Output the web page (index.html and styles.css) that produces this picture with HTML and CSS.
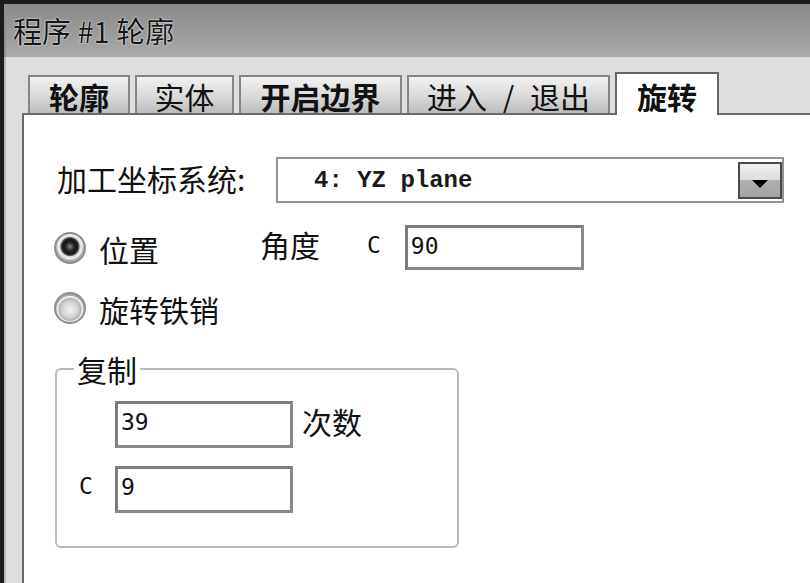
FILE: index.html
```html
<!DOCTYPE html>
<html lang="zh">
<head>
<meta charset="utf-8">
<title>程序 #1 轮廓</title>
<link rel="stylesheet" href="styles.css">
</head>
<body>
<div class="window">
  <div class="titlebar">程序 #1 轮廓</div>
  <div class="frame">
    <div class="tabs">
      <div class="tab bold t1">轮廓</div>
      <div class="tab t2">实体</div>
      <div class="tab bold t3">开启边界</div>
      <div class="tab t4">进入 / 退出</div>
      <div class="tab bold active t5">旋转</div>
    </div>
    <div class="panel">
      <div class="row row-csys">
        <span class="label csys-label">加工坐标系统:</span>
        <div class="combo">
          <span class="combo-text">4: YZ plane</span>
          <span class="combo-btn"><span class="arrow"></span></span>
        </div>
      </div>
      <div class="row row-pos">
        <span class="radio checked"></span>
        <span class="label radio-label">位置</span>
        <span class="label angle-label">角度</span>
        <span class="mono c-label">C</span>
        <div class="field angle-field">90</div>
      </div>
      <div class="row row-rot">
        <span class="radio"></span>
        <span class="label radio-label">旋转铁销</span>
      </div>
      <fieldset class="group">
        <legend class="label legend">复制</legend>
        <div class="rep-row rep-first">
          <span class="rep-lbl"></span>
          <div class="field rep-field">39</div>
          <span class="label count-label">次数</span>
        </div>
        <div class="rep-row">
          <span class="rep-lbl mono">C</span>
          <div class="field rep-field">9</div>
        </div>
      </fieldset>
    </div>
  </div>
</div>
</body>
</html>
```

FILE: styles.css
```css
html, body {
  margin: 0;
  padding: 0;
}
body {
  width: 810px;
  height: 583px;
  overflow: hidden;
  background: #dedede;
  font-family: "Noto Sans CJK SC", "Noto Sans", sans-serif;
  color: #111;
}
.window {
  width: 810px;
  height: 583px;
  box-sizing: border-box;
  border-top: 4px solid #1c1c1c;
  border-left: 4px solid #1c1c1c;
  display: flex;
  flex-direction: column;
}
.titlebar {
  height: 53px;
  flex: none;
  box-sizing: border-box;
  padding-left: 7px;
  display: flex;
  align-items: center;
  font-size: 29px;
  line-height: 1;
  color: #151515;
  background: linear-gradient(#8a8a8a, #9c9c9c 60%, #ababab);
  text-shadow: 0 0 2px rgba(255,255,255,0.9), 0 0 1px #fff;
  border-left: 2px solid #8f8f8f;
}
.frame {
  flex: 1;
  display: flex;
  flex-direction: column;
  padding: 15px 0 0 16px;
  background: #dedede;
  border-left: 2px solid #b8b8b8;
  box-sizing: border-box;
}
.tabs {
  height: 41px;
  flex: none;
  display: flex;
  align-items: flex-end;
  gap: 5px;
  padding-left: 6px;
}
.tab {
  box-sizing: border-box;
  height: 38px;
  border: 2px solid #858585;
  border-bottom: none;
  background: linear-gradient(#f2f2f2, #d9d9d9 55%, #bcbcbc);
  display: flex;
  align-items: center;
  justify-content: center;
  font-size: 30px;
  line-height: 1;
  color: #111;
  padding-top: 2px;
  white-space: pre;
}
.tab.bold { font-weight: 700; }
.t1 { width: 102px; }
.t2 { width: 99px; }
.t3 { width: 163px; }
.t4 { width: 203px; word-spacing: 9px; }
.t5 { width: 104px; }
.tab.active {
  height: 43px;
  margin-bottom: -2px;
  background: #fff;
  border-color: #666;
  position: relative;
  z-index: 1;
}
.panel {
  flex: 1;
  background: #fff;
  border-top: 2px solid #6a6a6a;
  border-left: 2px solid #6a6a6a;
  padding: 42px 0 0 30px;
  display: flex;
  flex-direction: column;
  align-items: flex-start;
}
.label {
  font-size: 30px;
  line-height: 1;
  color: #111;
}
.mono {
  font-family: "DejaVu Sans Mono", "Liberation Mono", monospace;
  font-size: 23px;
  line-height: 1;
  color: #111;
}
.row {
  display: flex;
  align-items: center;
}
.row-csys {
  height: 46px;
}
.csys-label {
  width: 222px;
  padding-left: 3px;
  box-sizing: border-box;
  margin-top: -4px;
}
.combo {
  width: 508px;
  height: 46px;
  box-sizing: border-box;
  border: 2px solid #939393;
  display: flex;
  align-items: center;
  justify-content: space-between;
  background: #fff;
}
.combo-text {
  font-family: "Liberation Mono", "Courier New", monospace;
  font-weight: 700;
  font-size: 24px;
  padding-left: 36px;
  color: #1a1a1a;
  white-space: pre;
}
.combo-btn {
  width: 44px;
  height: 37px;
  box-sizing: border-box;
  border: 2px solid #4a4a4a;
  background: linear-gradient(#f0f0f0, #dcdcdc 48%, #b0b0b0 50%, #a4a4a4);
  display: flex;
  align-items: flex-end;
  justify-content: center;
  padding-bottom: 9px;
}
.arrow {
  width: 0;
  height: 0;
  border-left: 8px solid transparent;
  border-right: 8px solid transparent;
  border-top: 8px solid #000;
}
.row-pos {
  margin-top: 22px;
  height: 45px;
}
.radio {
  width: 32px;
  height: 32px;
  border-radius: 50%;
  flex: none;
  box-sizing: border-box;
  border: 2px solid #8e8e8e;
  background: radial-gradient(circle at 50% 55%, #f4f4f4 0, #d2d2d2 8px, #b4b4b4 11px, #e6e6e6 12px, #f2f2f2 13px, #a9a9a9 14px);
}
.radio.checked {
  background: radial-gradient(circle at 50% 45%, #8a8a8a 0, #2a2a2a 4px, #111 7px, #555 9px, #dcdcdc 10px, #f0f0f0 12px, #a9a9a9 14px);
}
.radio-label {
  margin-left: 13px;
  margin-top: 2px;
}
.angle-label {
  margin-left: 101px;
  margin-top: -8px;
}
.c-label {
  margin-left: 47px;
  margin-top: -4px;
}
.field {
  box-sizing: border-box;
  border: 3px solid #8a8a8a;
  border-top-color: #7c7c7c;
  border-left-color: #7c7c7c;
  background: #fff;
  font-family: "DejaVu Sans Mono", "Liberation Mono", monospace;
  font-size: 23px;
  line-height: 1;
  color: #111;
  padding: 7px 0 0 3px;
}
.angle-field {
  width: 179px;
  height: 45px;
  margin-left: 24px;
}
.row-rot {
  margin-top: 21px;
  height: 34px;
}
.group {
  margin: 27px 0 0 1px;
  width: 404px;
  height: 196px;
  box-sizing: border-box;
  border: 2px solid #b9b9b9;
  border-radius: 6px;
  padding: 15px 0 0 22px;
  min-width: 0;
}
.legend {
  padding: 0 3px;
  margin-left: -5px;
  height: 34px;
  line-height: 34px;
}
.rep-row {
  display: flex;
  align-items: center;
  height: 47px;
}
.rep-row + .rep-row {
  margin-top: 18px;
}
.rep-lbl {
  width: 36px;
  flex: none;
  margin-top: -6px;
}
.rep-field {
  width: 178px;
  height: 47px;
}
.count-label {
  margin-left: 9px;
  margin-top: -8px;
}
```
